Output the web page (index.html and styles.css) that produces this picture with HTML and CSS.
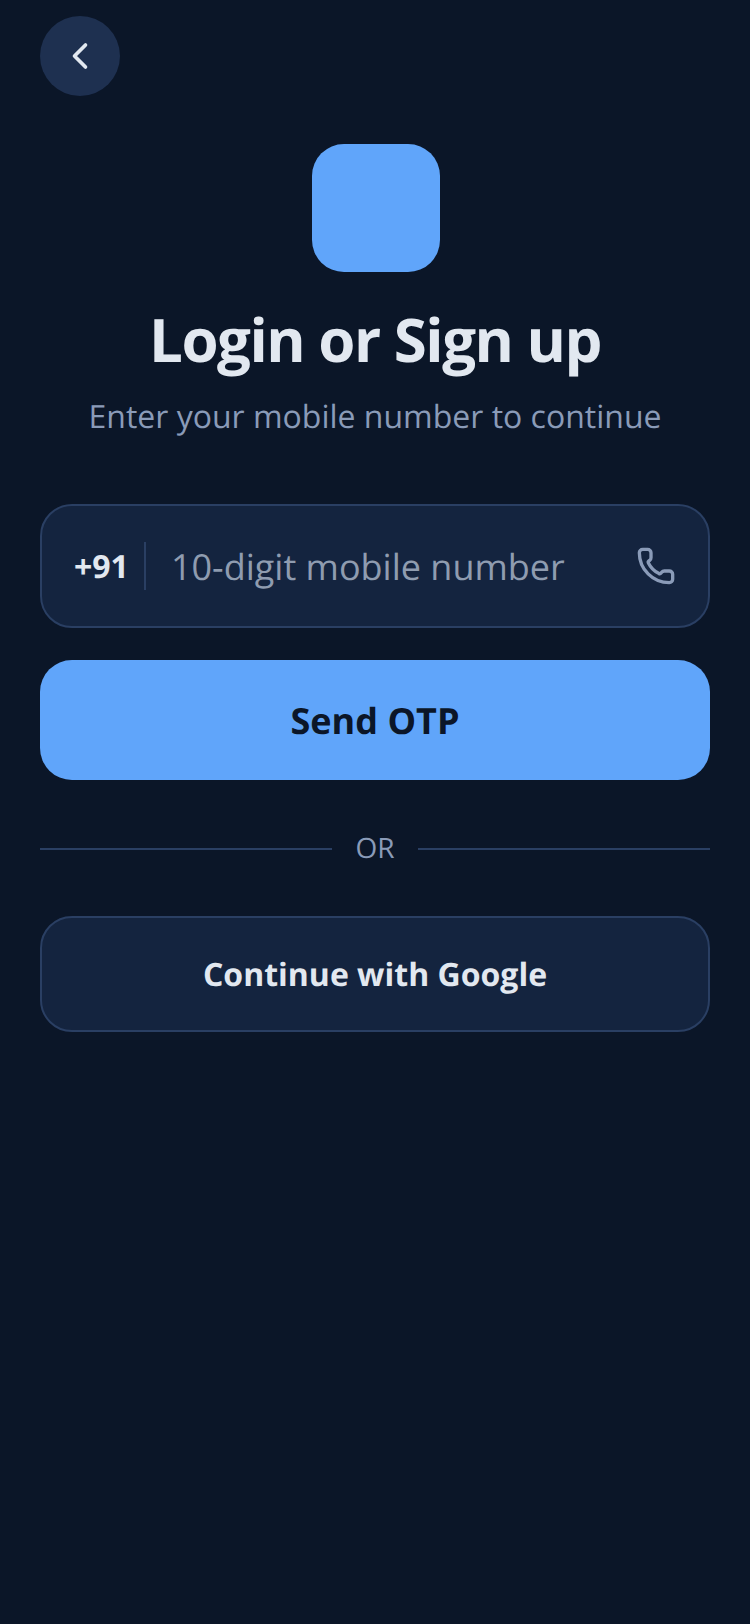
FILE: index.html
```html
<!DOCTYPE html>
<html lang="en">
<head>
<meta charset="utf-8">
<title>Login</title>
<link rel="stylesheet" href="styles.css">
</head>
<body>
<main class="screen">
  <div class="back">
    <svg class="back-icon" viewBox="0 0 24 24" fill="none" stroke="currentColor" stroke-width="2" stroke-linecap="round" stroke-linejoin="round"><path d="M15 18l-6-6 6-6"/></svg>
  </div>
  <div class="logo"></div>
  <h1 class="title">Login or Sign up</h1>
  <p class="subtitle">Enter your mobile number to continue</p>
  <div class="field">
    <span class="code">+91</span>
    <span class="sep"></span>
    <span class="placeholder">10-digit mobile number</span>
    <svg class="phone" viewBox="0 0 24 24" fill="none" stroke="currentColor" stroke-width="2" stroke-linecap="round" stroke-linejoin="round"><path d="M13.832 16.568a1 1 0 0 0 1.213-.303l.355-.465A2 2 0 0 1 17 15h3a2 2 0 0 1 2 2v3a2 2 0 0 1-2 2A18 18 0 0 1 2 4a2 2 0 0 1 2-2h3a2 2 0 0 1 2 2v3a2 2 0 0 1-.8 1.6l-.468.351a1 1 0 0 0-.292 1.233 14 14 0 0 0 6.392 6.384"/></svg>
  </div>
  <div class="primary">Send OTP</div>
  <div class="divider"><span class="line"></span><span class="or">OR</span><span class="line"></span></div>
  <div class="google">Continue with Google</div>
</main>
</body>
</html>
```
FILE: styles.css
```css
* { box-sizing: border-box; }
html, body { margin: 0; padding: 0; }
body { background: #0b1628; font-family: "Open Sans", sans-serif; text-rendering: geometricPrecision; }
.screen { width: 750px; height: 1624px; padding: 16px 40px 0; display: flex; flex-direction: column; background: #0b1628; overflow: hidden; }
.back { width: 80px; height: 80px; border-radius: 50%; background: #1e3050; color: #e2e8f0; display: flex; align-items: center; justify-content: center; }
.back-icon { width: 44px; height: 44px; }
.logo { width: 128px; height: 128px; margin: 48px 0 0 272px; border-radius: 32px; background: #60a5fa; }
.title { margin: 25px 0 0; text-align: center; font-size: 60px; line-height: 84px; font-weight: 700; letter-spacing: -1.5px; color: #e2e8f0; }
.subtitle { margin: 12px 0 0; text-align: center; font-size: 32px; line-height: 48px; color: #8a9bb8; }
.field { height: 124px; margin-top: 63px; padding: 0 32px; display: flex; align-items: center; background: #14243f; border: 2px solid #2a3f63; border-radius: 32px; }
.code { font-size: 32px; font-weight: 700; color: #e2e8f0; }
.sep { width: 2px; height: 48px; margin: 0 25px 0 15px; background: #2a3f63; }
.placeholder { flex: 1; font-size: 36px; color: #8f9cb0; }
.phone { width: 40px; height: 40px; color: #8a9bb8; }
.primary { height: 120px; margin-top: 32px; display: flex; align-items: center; justify-content: center; background: #60a5fa; border-radius: 32px; font-size: 36px; font-weight: 700; color: #0b1628; }
.divider { margin-top: 48px; height: 42px; display: flex; align-items: center; gap: 23px; }
.line { flex: 1; height: 2px; background: #2a3f63; }
.or { padding-bottom: 2px; font-size: 28px; color: #8a9bb8; }
.google { height: 116px; margin-top: 46px; display: flex; align-items: center; justify-content: center; background: #14243f; border: 2px solid #2a3f63; border-radius: 32px; font-size: 32px; font-weight: 700; color: #e2e8f0; }
```
